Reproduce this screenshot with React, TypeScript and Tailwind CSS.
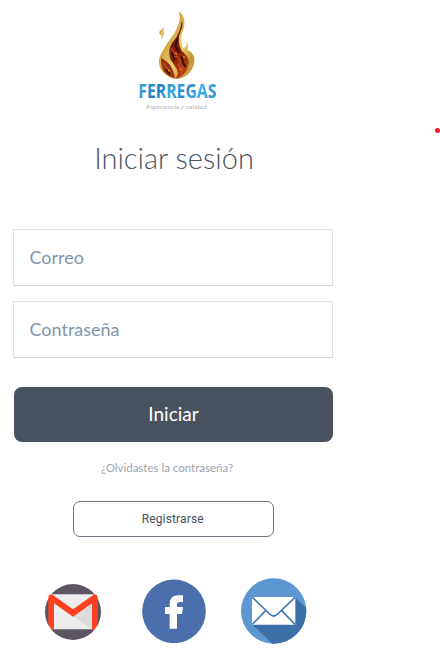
import React from 'react';

function Logo() {
  return (
    <svg className="ml-[120px] block h-[120px] w-[120px] shrink-0" viewBox="0 0 360 360" role="img" aria-label="Ferregas">
      <defs>
        <linearGradient id="gold" x1="0" y1="0" x2="1" y2="1">
          <stop offset="0" stopColor="#b08330" />
          <stop offset="0.35" stopColor="#d3a540" />
          <stop offset="0.6" stopColor="#ecd078" />
          <stop offset="0.8" stopColor="#c4953a" />
          <stop offset="1" stopColor="#dcb454" />
        </linearGradient>
        <linearGradient id="ember" x1="0" y1="0" x2="0.4" y2="1">
          <stop offset="0" stopColor="#9a5220" />
          <stop offset="0.3" stopColor="#6a1c0c" />
          <stop offset="0.7" stopColor="#8e250b" />
          <stop offset="1" stopColor="#b53c10" />
        </linearGradient>
        <linearGradient id="brand" x1="0" y1="0" x2="1" y2="0.2">
          <stop offset="0" stopColor="#3cb4ea" />
          <stop offset="0.2" stopColor="#2a90d2" />
          <stop offset="0.35" stopColor="#2478bd" />
          <stop offset="0.5" stopColor="#35a9e2" />
          <stop offset="0.68" stopColor="#2b87c8" />
          <stop offset="0.85" stopColor="#3bb0e6" />
          <stop offset="1" stopColor="#2f98d6" />
        </linearGradient>
      </defs>
      <path d="M132 81 L118 95 Q117 102 124 107 L123 119 Q132 108 133 99 Q130 94 132 81Z" fill="url(#gold)" />
      <path d="M176 33 Q197 51 193 76 Q190 94 184 107 Q182 128 190 145 Q204 139 198 121 Q208 138 202 149 Q220 156 223 176 Q226 199 206 221 Q191 236 163 237 Q134 230 121 206 Q111 182 124 160 Q132 145 149 119 Q170 93 177 68 Q182 51 176 33Z" fill="url(#gold)" />
      <path d="M186 60 Q190 77 182 94 Q176 106 176 122 Q177 139 186 154 Q203 166 206 184 Q206 208 190 223 Q180 235 167 236 L174 221 Q172 205 160 191 Q148 178 148 160 Q147 140 160 124 Q180 103 186 60Z" fill="url(#ember)" />
      <path d="M123 173 Q138 181 148 193 Q161 209 165 235 Q143 231 131 214 Q122 199 123 173Z" fill="#9b3311" />
      <path d="M154 144 L163 158 L160 172 L172 168 L181 184 L176 196 L190 207 L183 219 M130 191 L142 205 L155 220" fill="none" stroke="#d95b18" strokeWidth="3" />
      <path d="M173 114 L166 139 L178 157 M184 169 L190 190 L196 200 M156 158 L164 182 M138 209 L150 222" fill="none" stroke="#35120d" strokeWidth="6" />
      <path d="M166 158 L170 164 M179 205 L184 211 M144 209 L148 214 M190 168 L194 174" stroke="#f58a2a" strokeWidth="4" />
      <text x="55" y="294" textLength="234" lengthAdjust="spacingAndGlyphs" fontFamily="'Open Sans', 'Noto Sans', sans-serif" fontWeight="700" fontSize="57" fill="url(#brand)">FERREGAS</text>
      <text x="79" y="326" textLength="180" lengthAdjust="spacingAndGlyphs" fontFamily="'Liberation Serif', serif" fontStyle="italic" fontSize="21" fill="#a9a9ac">Experiencia y calidad</text>
    </svg>
  );
}

function GmailIcon() {
  return (
    <svg className="block h-[56px] w-[56px]" viewBox="0 0 168 168">
      <defs>
        <clipPath id="disc"><circle cx="84" cy="84" r="84" /></clipPath>
      </defs>
      <circle cx="84" cy="84" r="84" fill="#5d5561" />
      <g clipPath="url(#disc)">
        <path d="M12 31H156V136H12Z" fill="#ededee" />
        <path d="M84 97L146 50V136H141Z" fill="#dcdcdd" />
      </g>
      <path d="M20 31L84 76L148 31Q158 31 158 42V120Q153 131 147 137H141V58L84 98L27 58V137H21Q14 130 10 120V42Q10 31 20 31Z" fill="#ff4122" />
    </svg>
  );
}

function FacebookIcon() {
  return (
    <svg className="block h-[64px] w-[64px]" viewBox="0 0 192 192">
      <circle cx="96" cy="97" r="95.5" fill="#4a6fac" />
      <path d="M83 149V105H69V84H83V75Q83 49 109 49H123V69H114Q105 69 105 77V84H123L120 105H105V149Z" fill="#fff" />
    </svg>
  );
}

function MailIcon() {
  return (
    <svg className="block h-[66px] w-[66px]" viewBox="0 0 198 198">
      <defs>
        <clipPath id="mailDisc"><circle cx="98" cy="99" r="98" /></clipPath>
      </defs>
      <circle cx="98" cy="99" r="98" fill="#5d97d2" />
      <path d="M162 57L230 125V230H127L34 139Z" fill="#3d70a6" clipPath="url(#mailDisc)" />
      <path d="M33 57H163V140H33Z" fill="#fff" />
      <path d="M34 58L86 108Q98 120 110 108L162 58M34 139L74 98M162 139L122 98" fill="none" stroke="#4379b1" strokeWidth="5" />
    </svg>
  );
}

const inputClass =
  "block h-[57px] w-[320px] border border-[#dfe2e7] border-b-[#cdd1d8] bg-white pr-4 pl-[15.5px] pb-[2px] font-['Lato',sans-serif] text-[18px] text-[#8295ad] outline-none placeholder:text-[#8295ad] placeholder:opacity-100";

export default function App() {
  return (
    <main className="flex h-[667px] w-[440px] overflow-hidden bg-white font-['Lato',sans-serif]">
      <form className="flex w-[346px] shrink-0 flex-col" onSubmit={(e) => e.preventDefault()}>
        <Logo />
        <h1 className="mt-[20px] h-[36px] pl-[2px] text-center text-[29px] leading-[36px] font-light text-[#4a545f]">Iniciar sesión</h1>
        <div className="mt-[53px] ml-[13px] flex flex-col gap-[15px]">
          <input className={inputClass} type="text" placeholder="Correo" aria-label="Correo" />
          <input className={inputClass} type="password" placeholder="Contraseña" aria-label="Contraseña" />
        </div>
        <button className="mt-[29px] ml-[14px] h-[55px] w-[319px] rounded-[8px] bg-[#49535f] text-[19px] text-white">Iniciar</button>
        <a className="mt-[18px] block h-[16px] pr-[12px] text-center text-[11.5px] leading-[16px] text-[#9ba4b1]">¿Olvidastes la contraseña?</a>
        <button className="mt-[24.5px] ml-[73px] h-[36px] w-[201px] rounded-[7px] border border-[#6b737e] pr-[1.5px] font-['Roboto',sans-serif] text-[12px] tracking-[0.15px] text-[#46505c]">Registrarse</button>
        <div className="mt-[41.5px] ml-[45px] flex h-[66px] items-center">
          <div className="pt-px"><GmailIcon /></div>
          <div className="ml-[41px]"><FacebookIcon /></div>
          <div className="ml-[35px]"><MailIcon /></div>
        </div>
      </form>
      <span className="mt-[127.5px] ml-[88.5px] h-[5px] w-[5px] shrink-0 rounded-full bg-[#ef1c24]" />
    </main>
  );
}
